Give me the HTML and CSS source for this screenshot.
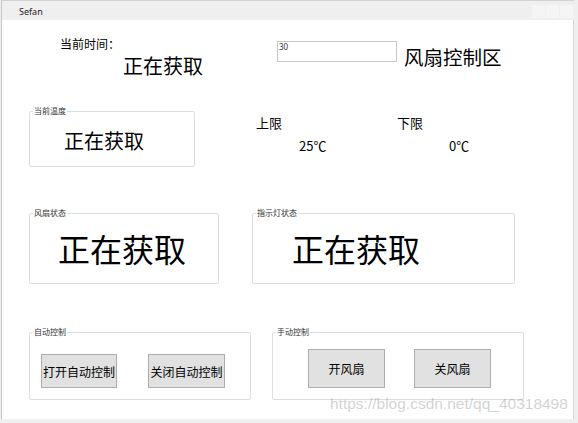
FILE: index.html
```html
<!DOCTYPE html>
<html lang="zh-CN">
<head>
    <meta charset="UTF-8">
    <title>Sefan</title>
    <link rel="stylesheet" href="styles.css">
</head>
<body>
    <div class="window">
        <div class="titlebar">
            <span class="title">Sefan</span>
            <div class="caption-btns"><span></span><span></span><span></span></div>
        </div>
        <div class="client">
            <div class="top-row">
                <div class="clock">
                    <div class="clock-label">当前时间：</div>
                    <div class="clock-value" id="timeValue">正在获取</div>
                </div>
                <textarea class="setpoint" id="setpoint">30</textarea>
                <div class="area-title">风扇控制区</div>
            </div>

            <div class="temp-row">
                <fieldset class="group temp-box">
                    <legend>当前温度</legend>
                    <div class="temp-value" id="tempValue">正在获取</div>
                </fieldset>
                <div class="limits">
                    <div class="limit">
                        <div class="limit-label">上限</div>
                        <div class="limit-value">25℃</div>
                    </div>
                    <div class="limit">
                        <div class="limit-label">下限</div>
                        <div class="limit-value low">0℃</div>
                    </div>
                </div>
            </div>

            <div class="status-row">
                <fieldset class="group fan-box">
                    <legend>风扇状态</legend>
                    <div class="status-value" id="fanState">正在获取</div>
                </fieldset>
                <fieldset class="group light-box">
                    <legend>指示灯状态</legend>
                    <div class="status-value" id="lightState">正在获取</div>
                </fieldset>
            </div>

            <div class="control-row">
                <fieldset class="group auto-box">
                    <legend>自动控制</legend>
                    <div class="btns">
                        <button id="autoOn">打开自动控制</button>
                        <button id="autoOff">关闭自动控制</button>
                    </div>
                </fieldset>
                <fieldset class="group manual-box">
                    <legend>手动控制</legend>
                    <div class="btns">
                        <button id="fanOn">开风扇</button>
                        <button id="fanOff">关风扇</button>
                    </div>
                </fieldset>
            </div>
        </div>
    </div>
    <div class="watermark">https://blog.csdn.net/qq_40318498</div>
</body>
</html>
```

FILE: styles.css
```css
* {
    box-sizing: border-box;
}
html, body {
    margin: 0;
}
body {
    position: relative;
    width: 578px;
    height: 423px;
    overflow: hidden;
    background: #efefef;
    font-family: "Noto Sans CJK SC", "Noto Sans", sans-serif;
    color: #000;
}

/* window frame */
.window {
    margin-left: 1px;
    width: 573px;
    border-top: 1px solid #d2d2d2;
    border-left: 1px solid #c4c4c4;
}
.titlebar {
    display: flex;
    align-items: flex-start;
    height: 19px;
    background: #efefef;
}
.title {
    padding: 3px 0 0 17px;
    font-family: "Noto Sans", sans-serif;
    font-size: 9px;
    line-height: 16px;
    color: #222;
}
.caption-btns {
    display: flex;
    gap: 1px;
    margin: 4px 1px 0 auto;
}
.caption-btns span {
    width: 13px;
    height: 13px;
    background: #f5f5f5;
}
.client {
    height: 399px;
    padding: 17px 0 0 1px;
    background: #fff;
    border-right: 1px solid #d6d6d6;
}

/* top row */
.top-row {
    display: flex;
    align-items: flex-start;
}
.clock {
    width: 217px;
    margin-left: 57px;
}
.clock-label {
    font-size: 12px;
    line-height: 14px;
}
.clock-value {
    margin: 3px 0 0 63px;
    font-size: 20px;
    line-height: 24px;
}
.setpoint {
    margin-top: 4px;
    width: 120px;
    height: 21px;
    padding: 0 1px;
    border: 1px solid #c9c9c9;
    font-family: "Noto Sans", sans-serif;
    font-size: 8px;
    line-height: 10px;
    color: #333;
    resize: none;
    overflow: hidden;
}
.area-title {
    margin: 8px 0 0 7px;
    font-size: 19.5px;
    line-height: 24px;
}

/* group boxes */
.group {
    margin: 0;
    padding: 0;
    min-width: 0;
    border: 1px solid #dadee2;
    border-radius: 2px;
}
.group legend {
    margin-left: 3px;
    padding: 0 1px;
    font-size: 8px;
    line-height: 10px;
    color: #333;
}

/* temperature row */
.temp-row {
    display: flex;
    align-items: flex-start;
    margin-top: 28px;
}
.temp-box {
    margin-left: 26px;
    width: 166px;
    height: 61px;
}
.temp-value {
    margin: 13px 0 0 34px;
    font-size: 20px;
    line-height: 24px;
}
.limits {
    display: flex;
    margin-left: 61px;
}
.limit {
    width: 141px;
    padding-top: 9px;
}
.limit-label {
    font-size: 13px;
    line-height: 16px;
}
.limit-value {
    margin: 7px 0 0 43px;
    font-size: 13px;
    line-height: 16px;
}
.limit-value.low {
    margin-left: 52px;
}

/* status row */
.status-row {
    display: flex;
    align-items: flex-start;
    margin-top: 41px;
}
.fan-box {
    margin-left: 26px;
    width: 190px;
    height: 76px;
}
.light-box {
    margin-left: 33px;
    width: 263px;
    height: 76px;
}
.status-value {
    margin: 11px 0 0 28px;
    font-size: 32px;
    line-height: 38px;
}
.light-box .status-value {
    margin-left: 39px;
}

/* control row */
.control-row {
    display: flex;
    align-items: flex-start;
    margin-top: 43px;
}
.btns {
    display: flex;
}
.auto-box {
    margin-left: 26px;
    width: 222px;
    height: 73px;
}
.auto-box .btns {
    gap: 31px;
    padding: 17px 0 0 11px;
}
.manual-box {
    margin-left: 21px;
    width: 252px;
    height: 73px;
}
.manual-box .btns {
    gap: 29px;
    padding: 12px 0 0 35px;
}
button {
    width: 77px;
    height: 34px;
    padding: 0;
    border: 1px solid #adadad;
    border-radius: 0;
    background: #e1e1e1;
    font-family: "Noto Sans CJK SC", sans-serif;
    font-size: 12px;
    color: #000;
    white-space: nowrap;
}
#autoOn {
    width: 76px;
}
.manual-box button {
    height: 39px;
}

.watermark {
    position: absolute;
    left: 330px;
    top: 395px;
    font-family: "Liberation Sans", sans-serif;
    font-size: 15.5px;
    line-height: 18px;
    color: rgba(140, 140, 140, 0.4);
}
```
